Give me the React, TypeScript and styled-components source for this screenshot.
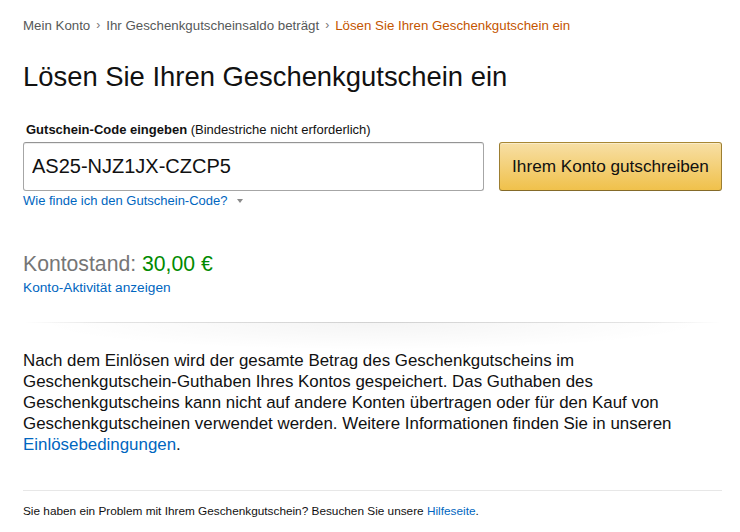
import React from "react";
import styled, { createGlobalStyle } from "styled-components";

const GlobalStyle = createGlobalStyle`
  html, body {
    margin: 0;
    padding: 0;
    background: #fff;
  }
  body {
    font-family: "Liberation Sans", Arial, sans-serif;
    color: #111;
  }
  * { box-sizing: border-box; }
`;

const Page = styled.div`
  padding: 16px 18px 0 23px;
  display: flex;
  flex-direction: column;
`;

const Breadcrumb = styled.nav`
  display: flex;
  align-items: center;
  font-size: 13.3px;
  line-height: 19px;
  color: #565959;
`;

const Crumb = styled.span<{ $active?: boolean }>`
  color: ${(p) => (p.$active ? "#c45500" : "#565959")};
`;

const Sep = styled.span`
  margin: 0 6px;
  color: #767676;
  font-size: 12px;
`;

const Title = styled.h1`
  margin: 26px 0 0;
  font-size: 27.4px;
  line-height: 32px;
  font-weight: 400;
  color: #111;
`;

const Label = styled.label`
  display: block;
  margin-top: 27px;
  padding-left: 3px;
  font-size: 13px;
  line-height: 19px;
  color: #111;
`;

const Strong = styled.span`
  font-weight: 700;
`;

const InputRow = styled.div`
  display: flex;
  gap: 15px;
  margin-top: 3px;
  height: 49px;
`;

const CodeInput = styled.input`
  flex: 1;
  height: 49px;
  padding: 0 8px;
  border: 1px solid #a6a6a6;
  border-top-color: #949494;
  border-radius: 3px;
  box-shadow: 0 1px 0 rgba(255, 255, 255, 0.5), 0 1px 0 rgba(0, 0, 0, 0.07) inset;
  font-family: "Liberation Sans", Arial, sans-serif;
  font-size: 20px;
  color: #111;
  outline: none;
`;

const RedeemButton = styled.button`
  width: 223px;
  height: 49px;
  border: 1px solid;
  border-color: #a88734 #9c7e31 #846a29;
  border-radius: 3px;
  background: linear-gradient(to bottom, #f7dfa5, #f0c14b);
  box-shadow: 0 1px 0 rgba(255, 255, 255, 0.4) inset;
  font-family: "Liberation Sans", Arial, sans-serif;
  font-size: 17.2px;
  color: #111;
  cursor: pointer;
  padding: 0;
`;

const HelpLine = styled.div`
  display: flex;
  align-items: center;
  font-size: 13px;
  line-height: 19px;
`;

const Link = styled.a`
  color: #0066c0;
  text-decoration: none;
`;

const Caret = styled.span`
  display: inline-block;
  margin-left: 9px;
  width: 0;
  height: 0;
  border-left: 3.5px solid transparent;
  border-right: 3.5px solid transparent;
  border-top: 4px solid #8a8a8a;
`;

const Balance = styled.div`
  margin-top: 41px;
  font-size: 21.2px;
  line-height: 26px;
  color: #767676;
`;

const Amount = styled.span`
  color: #008a00;
`;

const ActivityLine = styled.div`
  margin-top: 1px;
  font-size: 13.7px;
  line-height: 19px;
`;

const SectionDivider = styled.div`
  position: relative;
  margin-top: 25px;
  height: 28px;
  background: radial-gradient(ellipse 48% 100% at 50% 0, rgba(0, 0, 0, 0.045), rgba(0, 0, 0, 0) 100%);
  &::before {
    content: "";
    position: absolute;
    left: 0;
    right: 0;
    top: 0;
    height: 1px;
    background: linear-gradient(
      to right,
      rgba(0, 0, 0, 0) 0%,
      rgba(0, 0, 0, 0.1) 12%,
      rgba(0, 0, 0, 0.14) 50%,
      rgba(0, 0, 0, 0.1) 88%,
      rgba(0, 0, 0, 0) 100%
    );
  }
`;

const Paragraph = styled.p`
  margin: 0;
  font-size: 16.9px;
  line-height: 21px;
  color: #111;
`;

const Rule = styled.hr`
  margin: 35px 0 0;
  border: 0;
  height: 1px;
  background: #e7e7e7;
`;

const Footer = styled.p`
  margin: 12px 0 0;
  font-size: 11.8px;
  line-height: 17px;
  color: #111;
`;

export default function App() {
  return (
    <>
      <GlobalStyle />
      <Page>
        <Breadcrumb>
          <Crumb>Mein Konto</Crumb>
          <Sep>›</Sep>
          <Crumb>Ihr Geschenkgutscheinsaldo beträgt</Crumb>
          <Sep>›</Sep>
          <Crumb $active>Lösen Sie Ihren Geschenkgutschein ein</Crumb>
        </Breadcrumb>

        <Title>Lösen Sie Ihren Geschenkgutschein ein</Title>

        <Label htmlFor="gc-code">
          <Strong>Gutschein-Code eingeben</Strong> (Bindestriche nicht erforderlich)
        </Label>
        <InputRow>
          <CodeInput id="gc-code" defaultValue="AS25-NJZ1JX-CZCP5" />
          <RedeemButton>Ihrem Konto gutschreiben</RedeemButton>
        </InputRow>
        <HelpLine>
          <Link href="#">Wie finde ich den Gutschein-Code?</Link>
          <Caret />
        </HelpLine>

        <Balance>
          Kontostand: <Amount>30,00 €</Amount>
        </Balance>
        <ActivityLine>
          <Link href="#">Konto-Aktivität anzeigen</Link>
        </ActivityLine>

        <SectionDivider />

        <Paragraph>
          Nach dem Einlösen wird der gesamte Betrag des Geschenkgutscheins im
          Geschenkgutschein-Guthaben Ihres Kontos gespeichert. Das Guthaben des
          Geschenkgutscheins kann nicht auf andere Konten übertragen oder für den
          Kauf von Geschenkgutscheinen verwendet werden. Weitere Informationen
          finden Sie in unseren <Link href="#">Einlösebedingungen</Link>.
        </Paragraph>

        <Rule />

        <Footer>
          Sie haben ein Problem mit Ihrem Geschenkgutschein? Besuchen Sie unsere{" "}
          <Link href="#">Hilfeseite</Link>.
        </Footer>
      </Page>
    </>
  );
}
